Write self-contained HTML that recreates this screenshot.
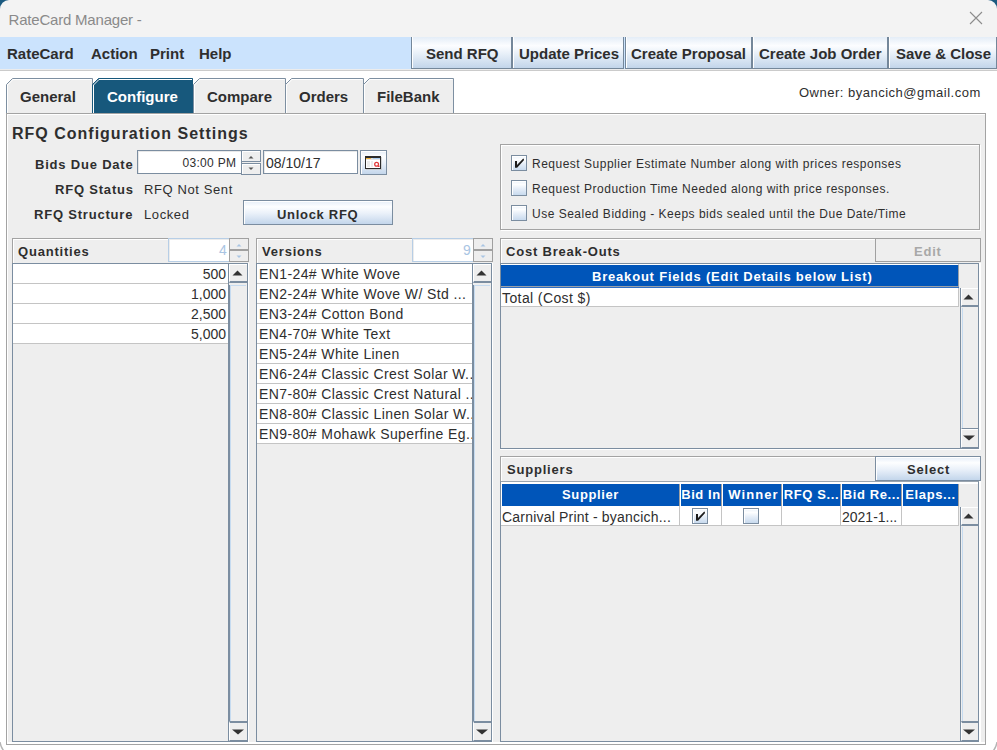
<!DOCTYPE html>
<html><head><meta charset="utf-8">
<style>
*{box-sizing:border-box;margin:0;padding:0}
html,body{width:997px;height:750px;overflow:hidden;background:#fff;font-family:"Liberation Sans",sans-serif;color:#2e2e2e}
div,svg{position:absolute}
.t{white-space:nowrap;line-height:1}
.b{font-weight:bold}
.s13{font-size:13px}
.s14{font-size:14px}
.s15{font-size:15px}
.tb{top:37px;height:32px;border:1px solid #74879a;border-top:none;box-shadow:inset 1px 0 0 #fff;background:linear-gradient(#e4edf7 0%,#fcfdff 28%,#e7eff8 55%,#c2d5ea 100%)}
.tab{top:78px;height:35px;background:#eee;border:1px solid #7d8fa1;border-bottom:none}
.etch{border:1px solid #a3a3a3;box-shadow:inset 1px 1px 0 #fff,1px 1px 0 #fff;background:#eee}
.sp{border:1px solid #7b8da0;background:#eee}
.btn{border:1px solid #7b8da0;box-shadow:inset 1px 1px 0 #fff;background:linear-gradient(#e6eef8 0%,#fdfeff 25%,#e9f0f9 55%,#c3d6eb 100%)}
.cb{width:16px;height:16px;border:1px solid #7b8da0;box-shadow:inset 1px 1px 0 #fff;background:linear-gradient(#eef4fb 0%,#fdfeff 25%,#e6eef8 55%,#c8daee 100%)}
.row{left:0;width:100%;height:20px;background:#fff;border-bottom:1px solid #c4c4c4}
.sbl{width:1px;background:#7b8da0}
.arrup{width:0;height:0;border-left:5px solid transparent;border-right:5px solid transparent;border-bottom:5px solid #333}
.arrdn{width:0;height:0;border-left:6px solid transparent;border-right:6px solid transparent;border-top:5px solid #333}
.hdr{background:#0055b9;color:#fff}
.spinf{border:1px solid #b7cee6;background:#fff;box-shadow:inset 1px 1px 0 #ececec}
.spinb{border:1px solid #a0a0a0;background:#eee}
</style></head><body>
<!-- title bar -->
<div style="left:0;top:0;width:997px;height:37px;background:#f3f3f3"></div>
<div style="left:0;top:0;width:10px;height:10px;background:#1b5a80"></div>
<div style="left:0;top:0;width:20px;height:20px;background:#f3f3f3;border-top-left-radius:9px"></div>
<div style="left:987px;top:0;width:10px;height:10px;background:#1b5a80"></div>
<div style="left:977px;top:0;width:20px;height:20px;background:#f3f3f3;border-top-right-radius:9px"></div>
<div class="t" style="left:8.5px;top:11.5px;font-size:15px;letter-spacing:-0.2px;color:#8a8a8a">RateCard Manager -</div>
<svg style="left:969px;top:11px" width="14" height="14"><path d="M1 1L13 13M13 1L1 13" stroke="#8c8c8c" stroke-width="1.1"/></svg>

<!-- menu -->
<div style="left:0;top:37px;width:997px;height:32px;background:#cbe3fd"></div>
<div style="left:0;top:69px;width:997px;height:1px;background:#ececec"></div><div style="left:0;top:70px;width:997px;height:1px;background:#cbcbcb"></div>
<div class="t b s15" style="left:7px;top:46px">RateCard</div>
<div class="t b s15" style="left:91px;top:46px">Action</div>
<div class="t b s15" style="left:150px;top:46px">Print</div>
<div class="t b s15" style="left:199px;top:46px">Help</div>

<div class="tb" style="left:411px;width:101px"></div>
<div class="tb" style="left:512px;width:112px"></div>
<div class="tb" style="left:625px;width:127px"></div>
<div class="tb" style="left:752px;width:136px"></div>
<div class="tb" style="left:888px;width:109px"></div>
<div class="t b s15" style="left:426px;top:46px">Send RFQ</div>
<div class="t b s15" style="left:519px;top:46px">Update Prices</div>
<div class="t b s15" style="left:631px;top:46px">Create Proposal</div>
<div class="t b s15" style="left:759px;top:46px">Create Job Order</div>
<div class="t b s15" style="left:896px;top:46px">Save &amp; Close</div>

<!-- tabs -->
<svg style="left:0;top:70px" width="500" height="50" viewBox="0 70 500 50"><path d="M6.5,113 V84.5 L12.5,78.5 H92.5 V113" fill="#eee" stroke="#7d8fa1" stroke-width="1"/><path d="M7.5,113 V85 L13,79.5 H91.5" fill="none" stroke="#fff" stroke-width="1"/><path d="M193.5,113 V84.5 L199.5,78.5 H285.5 V113" fill="#eee" stroke="#7d8fa1" stroke-width="1"/><path d="M194.5,113 V85 L200,79.5 H284.5" fill="none" stroke="#fff" stroke-width="1"/><path d="M285.5,113 V84.5 L291.5,78.5 H363.5 V113" fill="#eee" stroke="#7d8fa1" stroke-width="1"/><path d="M286.5,113 V85 L292,79.5 H362.5" fill="none" stroke="#fff" stroke-width="1"/><path d="M363.5,113 V84.5 L369.5,78.5 H453.5 V113" fill="#eee" stroke="#7d8fa1" stroke-width="1"/><path d="M364.5,113 V85 L370,79.5 H452.5" fill="none" stroke="#fff" stroke-width="1"/><path d="M92.5,113 V84.5 L98.5,78.5 H192.5 V113" fill="#17587c" stroke="#17587c"/><path d="M93.5,113 V85 L99,79.5 H192" fill="none" stroke="#fff"/></svg>
<div class="t b s15" style="left:20px;top:89px">General</div>
<div class="t b s15" style="left:107px;top:89px;color:#fff">Configure</div>
<div class="t b s15" style="left:207px;top:89px">Compare</div>
<div class="t b s15" style="left:299px;top:89px">Orders</div>
<div class="t b s15" style="left:377px;top:89px">FileBank</div>
<div class="t s13" style="left:799px;top:86px;letter-spacing:0.5px">Owner: byancich@gmail.com</div>

<!-- main panel -->
<div class="etch" style="left:6px;top:113px;width:980px;height:632px"></div>
<div class="t b" style="left:12px;top:125.5px;font-size:16px;letter-spacing:1px">RFQ Configuration Settings</div>

<div class="t b s13" style="left:35px;top:158px;letter-spacing:0.8px">Bids Due Date</div>
<div class="t b s13" style="left:55px;top:183px;letter-spacing:0.8px">RFQ Status</div>
<div class="t b s13" style="left:34px;top:208px;letter-spacing:0.8px">RFQ Structure</div>
<div class="t s13" style="left:144px;top:183px;letter-spacing:0.6px">RFQ Not Sent</div>
<div class="t s13" style="left:144px;top:208px;letter-spacing:0.6px">Locked</div>

<!-- time spinner -->
<div style="left:137px;top:150px;width:105px;height:24px;border:1px solid #7b8da0;background:#fff;box-shadow:inset 1px 1px 0 #e8e8e8"></div>
<div class="t" style="left:182.5px;top:157.4px;font-size:12px;letter-spacing:0.3px">03:00 PM</div>
<div style="left:241px;top:150px;width:20px;height:12px;border:1px solid #7b8da0;background:#eee;box-shadow:inset 1px 1px 0 #fff"></div>
<div style="left:241px;top:163px;width:20px;height:12px;border:1px solid #7b8da0;background:#eee;box-shadow:inset 1px 1px 0 #fff"></div>
<svg style="left:248px;top:155px" width="7" height="4"><polygon points="0.5,3.5 5.5,3.5 3,1" fill="#555"/></svg>
<svg style="left:248px;top:167px" width="7" height="4"><polygon points="0.5,0.5 5.5,0.5 3,3" fill="#555"/></svg>
<!-- date -->
<div style="left:263px;top:150px;width:95px;height:24px;border:1px solid #7b8da0;background:#fff;box-shadow:inset 1px 1px 0 #e8e8e8"></div>
<div class="t s14" style="left:266px;top:156px">08/10/17</div>
<div class="btn" style="left:360px;top:150px;width:27px;height:25px"></div>
<svg style="left:365px;top:156px" width="18" height="15">
<rect x="1" y="1" width="16" height="13" fill="#c4c4c4" opacity="0.7"/>
<rect x="0" y="0" width="16" height="13" fill="#2b2b2b"/>
<rect x="1" y="2" width="14" height="10" fill="#fff"/>
<rect x="1" y="2" width="5" height="1" fill="#f2b43c"/>
<rect x="6" y="2" width="2" height="1" fill="#ddd"/>
<rect x="8" y="2" width="7" height="1" fill="#a9cdf2"/>
<rect x="1" y="3" width="14" height="1" fill="#e4e4e4"/>
<rect x="2" y="5" width="3" height="6" fill="#ececec"/>
<rect x="6" y="5" width="2" height="6" fill="#ececec"/>
<circle cx="11.6" cy="8.3" r="1.9" fill="none" stroke="#e23a3a" stroke-width="1.3"/><rect x="13" y="9.5" width="1.5" height="1.5" fill="#e23a3a"/>
</svg>
<!-- unlock -->
<div class="btn" style="left:243px;top:200px;width:150px;height:25px"></div>
<div class="t b s13" style="left:277px;top:207.5px;letter-spacing:0.7px">Unlock RFQ</div>

<!-- checkbox panel -->
<div class="etch" style="left:500px;top:144px;width:480px;height:86px"></div>
<div class="cb" style="left:511px;top:155px"></div><svg style="left:511px;top:155px" width="16" height="16"><polygon points="4,6 6,6 6,9.9 12.2,3.6 12.9,4.1 12.9,5.3 6.1,12.7 4,12.7" fill="#1c1c1c"/></svg>
<div class="cb" style="left:511px;top:180px"></div>
<div class="cb" style="left:511px;top:205px"></div>
<div class="t" style="left:532px;top:157.5px;font-size:12px;letter-spacing:0.5px">Request Supplier Estimate Number along with prices responses</div>
<div class="t" style="left:532px;top:182.5px;font-size:12px;letter-spacing:0.5px">Request Production Time Needed along with price responses.</div>
<div class="t" style="left:532px;top:207.5px;font-size:12px;letter-spacing:0.5px">Use Sealed Bidding - Keeps bids sealed until the Due Date/Time</div>

<!-- quantities -->
<div class="etch" style="left:12px;top:238px;width:236px;height:25px;border-right:none;border-bottom:none;box-shadow:inset 1px 1px 0 #fff"></div>
<div class="t b s13" style="left:18px;top:245.3px;letter-spacing:0.8px">Quantities</div>
<div class="spinf" style="left:168px;top:238px;width:62px;height:24px"></div>
<div class="t s14" style="left:219px;top:244px;color:#a9c5e3;margin-top:-0.7px">4</div>
<div class="spinb" style="left:229px;top:238px;width:20px;height:12px"></div>
<div class="spinb" style="left:229px;top:250px;width:20px;height:12px"></div><svg style="left:236px;top:243px" width="7" height="4"><polygon points="0.5,3.5 5.5,3.5 3,1" fill="#a9c5e3"/></svg><svg style="left:236px;top:255px" width="7" height="4"><polygon points="0.5,0.5 5.5,0.5 3,3" fill="#a9c5e3"/></svg>
<div class="sp" style="left:12px;top:263px;width:236px;height:479px"></div>
<div style="left:13px;top:264px;width:215px;height:80px">
<div class="row" style="top:0px"></div><div class="t s14" style="right:2px;top:3px">500</div>
<div class="row" style="top:20px"></div><div class="t s14" style="right:2px;top:23px">1,000</div>
<div class="row" style="top:40px"></div><div class="t s14" style="right:2px;top:43px">2,500</div>
<div class="row" style="top:60px"></div><div class="t s14" style="right:2px;top:63px">5,000</div>
</div>
<div style="left:228px;top:264px;width:1px;height:477px;background:#7b8da0"></div>
<div style="left:229px;top:264px;width:18px;height:19px;background:#eee;border-top:1px solid #fff;border-left:1px solid #fff;border-bottom:2px solid #7b8da0"></div>
<svg style="left:232px;top:270px" width="12" height="6"><polygon points="0.5,5.5 10.5,5.5 5.5,0.5" fill="#333"/></svg>
<div style="left:229px;top:285px;width:1px;height:436px;background:#7b8da0"></div><div style="left:230px;top:285px;width:1px;height:436px;background:#c6dbf0"></div><div style="left:230px;top:285px;width:16px;height:1px;background:#c6dbf0"></div>
<div style="left:229px;top:721px;width:18px;height:20px;background:#eee;border-top:2px solid #7b8da0;border-left:1px solid #fff;border-bottom:1px solid #7b8da0"></div>
<svg style="left:232px;top:729px" width="12" height="6"><polygon points="0,0.5 12,0.5 6,5.5" fill="#333"/></svg>
<!-- versions -->
<div class="etch" style="left:256px;top:238px;width:236px;height:25px;border-right:none;border-bottom:none;box-shadow:inset 1px 1px 0 #fff"></div>
<div class="t b s13" style="left:262px;top:245.3px;letter-spacing:0.8px">Versions</div>
<div class="spinf" style="left:412px;top:238px;width:62px;height:24px"></div>
<div class="t s14" style="left:463px;top:244px;color:#a9c5e3;margin-top:-0.7px">9</div>
<div class="spinb" style="left:473px;top:238px;width:20px;height:12px"></div>
<div class="spinb" style="left:473px;top:250px;width:20px;height:12px"></div><svg style="left:480px;top:243px" width="7" height="4"><polygon points="0.5,3.5 5.5,3.5 3,1" fill="#a9c5e3"/></svg><svg style="left:480px;top:255px" width="7" height="4"><polygon points="0.5,0.5 5.5,0.5 3,3" fill="#a9c5e3"/></svg>
<div class="sp" style="left:256px;top:263px;width:236px;height:479px"></div>
<div style="left:257px;top:264px;width:215px;height:180px;overflow:hidden">
<div class="row" style="top:0px"></div><div class="t s14" style="letter-spacing:0.4px;left:2px;top:3px">EN1-24# White Wove</div>
<div class="row" style="top:20px"></div><div class="t s14" style="letter-spacing:0.4px;left:2px;top:23px">EN2-24# White Wove W/ Std ...</div>
<div class="row" style="top:40px"></div><div class="t s14" style="letter-spacing:0.4px;left:2px;top:43px">EN3-24# Cotton Bond</div>
<div class="row" style="top:60px"></div><div class="t s14" style="letter-spacing:0.4px;left:2px;top:63px">EN4-70# White Text</div>
<div class="row" style="top:80px"></div><div class="t s14" style="letter-spacing:0.4px;left:2px;top:83px">EN5-24# White Linen</div>
<div class="row" style="top:100px"></div><div class="t s14" style="letter-spacing:0.4px;left:2px;top:103px">EN6-24# Classic Crest Solar W...</div>
<div class="row" style="top:120px"></div><div class="t s14" style="letter-spacing:0.4px;left:2px;top:123px">EN7-80# Classic Crest Natural ...</div>
<div class="row" style="top:140px"></div><div class="t s14" style="letter-spacing:0.4px;left:2px;top:143px">EN8-80# Classic Linen Solar W...</div>
<div class="row" style="top:160px"></div><div class="t s14" style="letter-spacing:0.4px;left:2px;top:163px">EN9-80# Mohawk Superfine Eg...</div>
</div>
<div style="left:472px;top:264px;width:1px;height:477px;background:#7b8da0"></div>
<div style="left:473px;top:264px;width:18px;height:19px;background:#eee;border-top:1px solid #fff;border-left:1px solid #fff;border-bottom:2px solid #7b8da0"></div>
<svg style="left:476px;top:270px" width="12" height="6"><polygon points="0.5,5.5 10.5,5.5 5.5,0.5" fill="#333"/></svg>
<div style="left:473px;top:285px;width:1px;height:436px;background:#7b8da0"></div><div style="left:474px;top:285px;width:1px;height:436px;background:#c6dbf0"></div><div style="left:474px;top:285px;width:16px;height:1px;background:#c6dbf0"></div>
<div style="left:473px;top:721px;width:18px;height:20px;background:#eee;border-top:2px solid #7b8da0;border-left:1px solid #fff;border-bottom:1px solid #7b8da0"></div>
<svg style="left:476px;top:729px" width="12" height="6"><polygon points="0,0.5 12,0.5 6,5.5" fill="#333"/></svg>
<!-- cost -->
<div class="etch" style="left:500px;top:238px;width:478px;height:25px;border-right:none;border-bottom:none;box-shadow:inset 1px 1px 0 #fff"></div>
<div class="t b s13" style="left:506px;top:245.3px;letter-spacing:0.8px">Cost Break-Outs</div>
<div style="left:875px;top:238px;width:106px;height:24px;border:1px solid #a0a0a0;background:#eee"></div>
<div class="t b s13" style="left:914px;top:245.3px;letter-spacing:0.8px;color:#a8a8a8">Edit</div>
<div class="sp" style="left:500px;top:263px;width:479px;height:186px"></div>
<div class="hdr" style="left:501px;top:264px;width:458px;height:23px;border-top:1px solid #fff;border-bottom:1px solid #9aa0a8;border-right:1px solid #9aa0a8"></div><div style="left:501px;top:287px;width:458px;height:1px;background:#2f6fc4"></div>
<div class="t b s13" style="left:592px;top:270.3px;letter-spacing:0.8px;color:#fff">Breakout Fields (Edit Details below List)</div>
<div style="left:501px;top:288px;width:458px;height:19px;background:#fff;border-bottom:1px solid #c4c4c4;border-right:1px solid #c4c4c4"></div>
<div class="t s14" style="left:502px;top:290.5px;letter-spacing:0.4px">Total (Cost $)</div>
<div style="left:960px;top:288px;width:1px;height:160px;background:#7b8da0"></div>
<div style="left:961px;top:288px;width:17px;height:19px;background:#eee;border-top:1px solid #fff;border-left:1px solid #fff;border-bottom:2px solid #7b8da0"></div>
<svg style="left:963px;top:294px" width="12" height="6"><polygon points="0.5,5.5 10.5,5.5 5.5,0.5" fill="#333"/></svg>
<div style="left:962px;top:308px;width:1px;height:120px;background:#c6dbf0"></div>
<div style="left:961px;top:428px;width:17px;height:20px;background:#eee;border-top:1px solid #7b8da0;border-left:1px solid #fff;border-bottom:1px solid #7b8da0;box-shadow:inset 0 1px 0 #fff"></div>
<svg style="left:963px;top:435px" width="12" height="6"><polygon points="0,0.5 12,0.5 6,5.5" fill="#333"/></svg>
<!-- etched highlights -->
<div style="left:8px;top:742px;width:977px;height:2px;background:#fff"></div>
<div style="left:248px;top:263px;width:1px;height:479px;background:#fff"></div>
<div style="left:492px;top:263px;width:1px;height:479px;background:#fff"></div>
<div style="left:979px;top:263px;width:2px;height:186px;background:#fff"></div>
<div style="left:500px;top:449px;width:481px;height:1px;background:#fff"></div>
<div style="left:979px;top:481px;width:2px;height:261px;background:#fff"></div>
<!-- suppliers -->
<div class="etch" style="left:500px;top:456px;width:478px;height:25px;border-right:none;border-bottom:none;box-shadow:inset 1px 1px 0 #fff"></div>
<div class="t b s13" style="left:507px;top:462.8px;letter-spacing:0.8px">Suppliers</div>
<div class="btn" style="left:875px;top:456px;width:106px;height:25px"></div>
<div class="t b s13" style="left:907px;top:462.8px;letter-spacing:0.8px">Select</div>
<div class="sp" style="left:500px;top:481px;width:479px;height:261px;border-top-color:#9aa5b0"></div>
<div style="left:501px;top:482px;width:477px;height:2px;background:#fff"></div>

<div class="hdr" style="left:501px;top:484px;width:179px;height:22px;border-left:1px solid #fff;border-right:1px solid #a0a0a0;text-align:center;font-size:13px;font-weight:bold;letter-spacing:0.6px;line-height:21px;overflow:hidden;white-space:nowrap">Supplier</div>
<div style="left:501px;top:506px;width:179px;height:20px;background:#fff;border-right:1px solid #c4c4c4;border-bottom:1px solid #c4c4c4"></div>
<div class="hdr" style="left:680px;top:484px;width:42px;height:22px;border-left:1px solid #fff;border-right:1px solid #a0a0a0;text-align:center;font-size:13px;font-weight:bold;letter-spacing:0.6px;line-height:21px;overflow:hidden;white-space:nowrap">Bid In</div>
<div style="left:680px;top:506px;width:42px;height:20px;background:#fff;border-right:1px solid #c4c4c4;border-bottom:1px solid #c4c4c4"></div>
<div class="hdr" style="left:722px;top:484px;width:60px;height:22px;border-left:1px solid #fff;border-right:1px solid #a0a0a0;text-align:center;font-size:13px;font-weight:bold;letter-spacing:0.6px;line-height:21px;overflow:hidden;white-space:nowrap;letter-spacing:1.1px;text-indent:3px">Winner</div>
<div style="left:722px;top:506px;width:60px;height:20px;background:#fff;border-right:1px solid #c4c4c4;border-bottom:1px solid #c4c4c4"></div>
<div class="hdr" style="left:782px;top:484px;width:59px;height:22px;border-left:1px solid #fff;border-right:1px solid #a0a0a0;text-align:center;font-size:13px;font-weight:bold;letter-spacing:0.6px;line-height:21px;overflow:hidden;white-space:nowrap">RFQ S...</div>
<div style="left:782px;top:506px;width:59px;height:20px;background:#fff;border-right:1px solid #c4c4c4;border-bottom:1px solid #c4c4c4"></div>
<div class="hdr" style="left:841px;top:484px;width:61px;height:22px;border-left:1px solid #fff;border-right:1px solid #a0a0a0;text-align:center;font-size:13px;font-weight:bold;letter-spacing:0.6px;line-height:21px;overflow:hidden;white-space:nowrap">Bid Re...</div>
<div style="left:841px;top:506px;width:61px;height:20px;background:#fff;border-right:1px solid #c4c4c4;border-bottom:1px solid #c4c4c4"></div>
<div class="hdr" style="left:902px;top:484px;width:57px;height:22px;border-left:1px solid #fff;border-right:1px solid #a0a0a0;text-align:center;font-size:13px;font-weight:bold;letter-spacing:0.6px;line-height:21px;overflow:hidden;white-space:nowrap">Elaps...</div>
<div style="left:902px;top:506px;width:57px;height:20px;background:#fff;border-right:1px solid #c4c4c4;border-bottom:1px solid #c4c4c4"></div>
<div class="t s14" style="left:502px;top:510px;letter-spacing:0.2px">Carnival Print - byancich...</div>
<div class="t s14" style="left:842px;top:510px">2021-1...</div>
<div class="cb" style="left:692px;top:508px"></div><svg style="left:692px;top:508px" width="16" height="16"><polygon points="4,6 6,6 6,9.9 12.2,3.6 12.9,4.1 12.9,5.3 6.1,12.7 4,12.7" fill="#1c1c1c"/></svg>
<div class="cb" style="left:743px;top:508px"></div>
<div style="left:960px;top:507px;width:1px;height:234px;background:#7b8da0"></div>
<div style="left:961px;top:507px;width:17px;height:19px;background:#eee;border-top:1px solid #fff;border-left:1px solid #fff;border-bottom:2px solid #7b8da0"></div>
<svg style="left:963px;top:513px" width="12" height="6"><polygon points="0.5,5.5 10.5,5.5 5.5,0.5" fill="#333"/></svg>
<div style="left:962px;top:527px;width:1px;height:194px;background:#c6dbf0"></div>
<div style="left:961px;top:721px;width:17px;height:20px;background:#eee;border-top:2px solid #7b8da0;border-left:1px solid #fff;border-bottom:1px solid #7b8da0"></div>
<svg style="left:963px;top:729px" width="12" height="6"><polygon points="0,0.5 12,0.5 6,5.5" fill="#333"/></svg>
<svg style="left:0;top:738px" width="8" height="12"><path d="M0,4 Q0.8,9 3.5,12.5" fill="none" stroke="#b4b4b4" stroke-width="1.4"/></svg>
<svg style="left:989px;top:738px" width="8" height="12"><path d="M8,4 Q7.2,9 4.5,12.5" fill="none" stroke="#b4b4b4" stroke-width="1.4"/></svg>
</body></html>
